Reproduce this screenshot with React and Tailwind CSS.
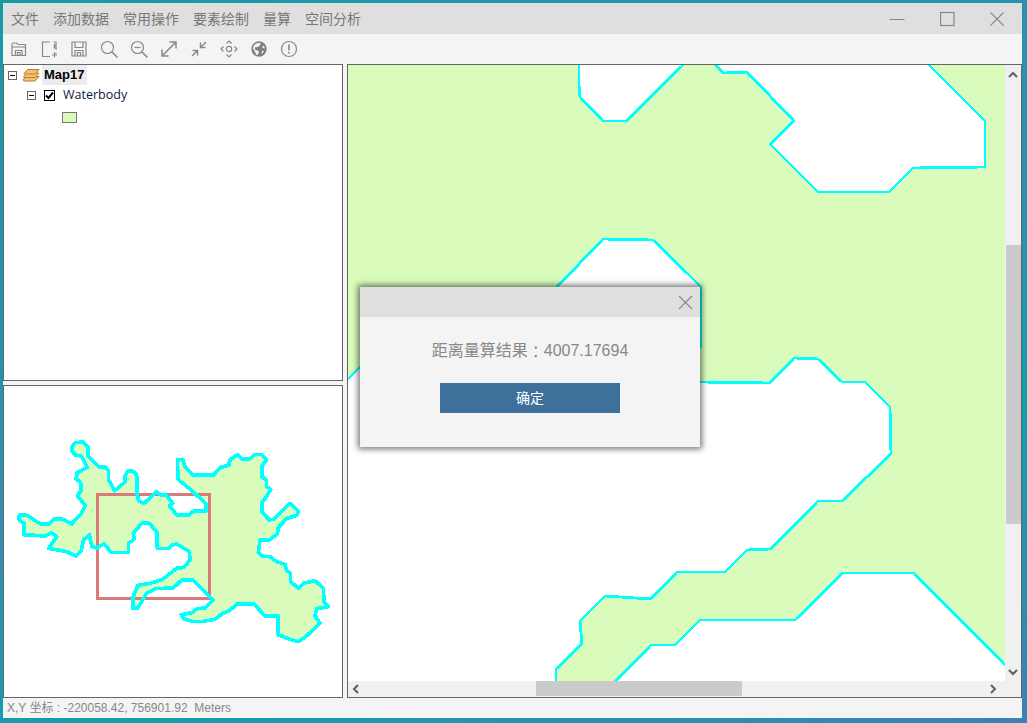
import React from "react";

const I = ({ children }) => (
  <div className="w-[30px] h-[30px] flex items-center justify-center">
    <svg width="20" height="20" viewBox="0 0 20 20" fill="none" stroke="#888888" strokeWidth="1.2">{children}</svg>
  </div>
);

const mapGreen = "340,60 579,60 579,85 580,97 603,121 627,121 688,60 710,60 724,73 747,72 794,121 770,144 818,192 889,192 913,168 985,167 985,121 924,60 1015,60 1015,675 1005,665 914,573 843,573 795,620 700,620 675,645 651,645 607,690 556,690 556,669 582,644 580,621 605,596 651,599 677,572 725,572 747,550 771,549 818,501 842,501 891,454 890,407 865,382 842,382 818,359 794,358 770,383 700,382 500,382 371,356 340,387";
const mapHole = "557,287 603,239 653,240 687,273 701,287 701,347 600,350";

const over = "218,195 225,188 250,186 264,200 264,228 298,262 318,262 326,272 326,300 344,332 375,306 374,290 382,274 400,274 410,286 412,345 416,362 432,370 470,335 484,346 500,346 518,370 508,378 532,406 566,406 580,394 618,394 618,372 578,334 534,298 532,240 548,238 556,262 580,286 640,286 662,262 686,256 690,240 712,224 728,238 750,236 764,224 786,224 800,240 786,258 786,290 800,302 800,320 812,328 800,350 786,366 786,396 808,420 820,418 870,370 896,396 890,406 860,416 835,442 832,462 808,480 780,480 775,518 790,530 810,530 830,545 855,553 860,572 872,580 872,605 895,625 910,610 945,602 970,625 972,665 985,680 950,686 945,708 960,730 915,772 895,785 870,778 850,770 835,765 835,708 795,708 762,672 712,672 688,692 668,700 645,718 610,724 580,725 550,716 544,704 575,698 592,686 615,684 640,660 578,600 545,600 520,624 466,626 440,640 425,665 412,685 398,685 400,648 414,616 450,610 488,598 530,565 552,562 570,540 568,515 530,492 514,496 505,506 472,505 472,458 448,430 425,430 400,460 402,478 386,490 386,518 335,518 312,492 290,504 276,500 268,465 250,480 244,512 228,528 200,515 146,505 170,470 155,458 135,468 72,464 72,430 58,420 58,406 82,406 102,420 122,432 146,432 160,418 190,418 215,432 244,400 256,376 232,348 244,330 242,308 228,296 232,278 262,262 244,228 225,225 215,210";

const Minus = () => (
  <div className="w-[9px] h-[9px] border border-[#666666] flex items-center justify-center bg-white">
    <div className="w-[5px] h-px bg-black" />
  </div>
);

const Chev = ({ d }) => (
  <svg width="10" height="8" viewBox="0 0 10 8" fill="none" stroke="#606060" strokeWidth="2"><path d={d} /></svg>
);

export default function App() {
  return (
    <div className="w-[1027px] h-[723px] overflow-hidden pt-[3px] pl-[3px] pr-[5px] pb-[5px] bg-[linear-gradient(160deg,#169aa6,#2f8fb2_50%,#12a0a8_70%,#3b82b4)]">
      <div className="w-full h-full flex flex-col bg-[#f4f4f4] relative font-['Liberation_Sans','Noto_Sans_CJK_SC',sans-serif]">
        <div className="h-[31px] bg-[#dfdfdf] flex items-center justify-between shrink-0">
          <div className="flex gap-[14px] pl-[8px] text-[14px] text-[#777777] font-['Noto_Sans_CJK_SC',sans-serif]">
            <span>文件</span><span>添加数据</span><span>常用操作</span><span>要素绘制</span><span>量算</span><span>空间分析</span>
          </div>
          <div className="flex items-center pr-[17px]">
            <svg width="16" height="16" viewBox="0 0 16 16" stroke="#888888" strokeWidth="1" fill="none"><path d="M0.5 8.5H15.5" /></svg>
            <svg className="ml-[35px]" width="16" height="16" viewBox="0 0 16 16" stroke="#888888" strokeWidth="1.2" fill="none"><rect x="0.6" y="1.5" width="13.4" height="13" /></svg>
            <svg className="ml-[33px]" width="16" height="16" viewBox="0 0 16 16" stroke="#888888" strokeWidth="1.1" fill="none"><path d="M1.5 1.5L14.5 14.5M14.5 1.5L1.5 14.5" /></svg>
          </div>
        </div>

        <div className="h-[30px] flex items-center pl-[1px] shrink-0">
          <I><path d="M3 16.5V5.5L4 4H8L9 5.5H16.5V16.5ZM3 8H16.5M6.5 16.5V11.5H13V16.5M8.5 16.5V13.5H11V16.5" /></I>
          <I><path d="M11 3H3.5V17.5H11M14.5 3H17V11M17 14V15" /><path d="M15.5 13V18.5M13 16H18" /><path d="M15.5 5V9.5" strokeWidth="1.6" /></I>
          <I><path d="M3 3H17V17H3ZM6 3V8.5H14V3M6 17V11.5H14V17M8.5 17V13.5H11.5V17" /></I>
          <I><circle cx="8.5" cy="8.5" r="6" /><path d="M13 13L18.5 18.5" strokeWidth="1.6" /></I>
          <I><circle cx="8.5" cy="8.5" r="6" /><path d="M13 13L18.5 18.5" strokeWidth="1.6" /><path d="M5.5 8.5H11.5" /></I>
          <I><path d="M3 17L17 3M10.5 3H17V9.5M3 10.5V17H9.5" strokeWidth="1.5" /></I>
          <I><path d="M3 17L8.5 11.5M3.5 11.5H8.5V16.5M17 3L11.5 8.5M11.5 3.5V8.5H16.5" strokeWidth="1.5" /></I>
          <I><circle cx="10" cy="10" r="2.7" /><path d="M7.5 4.5L10 2L12.5 4.5M7.5 15.5L10 18L12.5 15.5M4.5 7.5L2 10L4.5 12.5M15.5 7.5L18 10L15.5 12.5" /></I>
          <I><circle cx="10" cy="10" r="7.7" fill="#808080" stroke="none" /><path d="M7.5 4.2L11.5 3.8L11 6.5L8.5 8L5.5 8.5L6.5 11L9 11.5L10 13.5L8.5 16L7 15.5L6 12.5L3.8 9.5L5 6Z" fill="#f4f4f4" stroke="none" /><path d="M13.5 6.5L15.5 8L15.8 9.5L13.5 9ZM13 12L15 12L13.5 14.5L12.5 14Z" fill="#f4f4f4" stroke="none" /></I>
          <I><circle cx="10" cy="10" r="7.5" /><path d="M10 5.5V11.5" strokeWidth="1.6" /><path d="M10 13V14.6" strokeWidth="1.6" /></I>
        </div>

        <div className="flex-1 flex gap-[4px] min-h-0">
          <div className="w-[340px] flex flex-col gap-[4px]">
            <div className="h-[317px] bg-white border border-[#666666] shrink-0 text-[13px]">
              <div className="h-[20px] flex items-center pl-[4px]">
                <Minus />
                <svg className="ml-[5px]" width="18" height="14" viewBox="0 0 18 14" stroke="#b5802f" strokeWidth="1" fill="#f4c16d">
                  <path d="M1 11.5L5 8.5H17L13 13H2Z" />
                  <path d="M1.5 8.5L5 5H17L13.5 9.5H2Z" />
                  <path d="M2 5.5L5.5 1.5H17L13.5 6H2.5Z" />
                </svg>
                <span className="ml-[2px] pl-[2px] w-[45px] h-[20px] flex items-center bg-[#ececec] font-bold text-black text-[13px]">Map17</span>
              </div>
              <div className="h-[20px] flex items-center pl-[23px]">
                <Minus />
                <div className="ml-[8px] w-[11px] h-[11px] border border-black flex items-center justify-center">
                  <svg width="9" height="9" viewBox="0 0 9 9" fill="none" stroke="#000" strokeWidth="2"><path d="M1 4.5L3.5 7L8 1.5" /></svg>
                </div>
                <span className="ml-[8px] text-[#10203a] font-['Open_Sans',sans-serif] text-[12.5px]">Waterbody</span>
              </div>
              <div className="pl-[58px] pt-[7px]">
                <div className="w-[15px] h-[11px] border border-[#777777] bg-[#d9fcbc]" />
              </div>
            </div>
            <div className="flex-1 bg-white border border-[#666666] min-h-0">
              <svg width="338" height="311" viewBox="4 386 338 311" className="block">
                <g transform="translate(0 380) scale(0.33333)">
                  <polygon points={over} fill="#d9fcbc" />
                  <rect x="292" y="343" width="336" height="313" fill="none" stroke="#d97b7b" strokeWidth="10" shapeRendering="crispEdges" />
                  <polygon points={over} fill="none" stroke="#00ffff" strokeWidth="11" strokeLinejoin="round" shapeRendering="crispEdges" />
                </g>
              </svg>
            </div>
          </div>

          <div className="flex-1 border border-[#666666] flex flex-col min-w-0 bg-white">
            <div className="flex-1 flex min-h-0">
              <svg width="657" height="616" viewBox="348 65 657 616" className="block shrink-0">
                <polygon points={mapGreen} fill="#d9fcbc" stroke="#00ffff" strokeWidth="2.8" strokeLinejoin="round" shapeRendering="crispEdges" />
                <polygon points={mapHole} fill="#ffffff" stroke="#00ffff" strokeWidth="2.8" strokeLinejoin="round" shapeRendering="crispEdges" />
              </svg>
              <div className="w-[16px] bg-[#f0f0f0] flex flex-col items-center">
                <div className="h-[18px] flex items-center justify-center pt-[2px]"><Chev d="M1 6L5 2L9 6" /></div>
                <div className="mt-[162px] w-[15px] h-[279px] bg-[#cbcbcb]" />
                <div className="mt-auto h-[18px] flex items-center justify-center"><Chev d="M1 2L5 6L9 2" /></div>
              </div>
            </div>
            <div className="h-[16px] bg-[#f0f0f0] flex items-center shrink-0">
              <div className="w-[16px] flex justify-center"><svg width="8" height="10" viewBox="0 0 8 10" fill="none" stroke="#606060" strokeWidth="2"><path d="M6 1L2 5L6 9" /></svg></div>
              <div className="ml-[172px] w-[206px] h-[15px] self-start bg-[#cbcbcb]" />
              <div className="ml-auto mr-[20px] w-[16px] flex justify-center"><svg width="8" height="10" viewBox="0 0 8 10" fill="none" stroke="#606060" strokeWidth="2"><path d="M2 1L6 5L2 9" /></svg></div>
            </div>
          </div>
        </div>

        <div className="h-[20px] shrink-0 flex items-center pl-[4px] text-[12px] text-[#888888] whitespace-pre">
          X,Y 坐标 : -220058.42, 756901.92  Meters
        </div>

        <div className="absolute left-[357px] top-[284px] w-[340px] h-[160px] bg-[#f4f4f4] shadow-[0_0_6px_2px_rgba(0,0,0,0.55)] flex flex-col">
          <div className="h-[30px] bg-[#dfdfdf] flex items-center justify-end pr-[7px]">
            <svg width="15" height="15" viewBox="0 0 15 15" stroke="#888888" strokeWidth="1.1" fill="none"><path d="M1 1L14 14M14 1L1 14" /></svg>
          </div>
          <div className="flex-1 flex flex-col items-center pt-[22px]">
            <div className="h-[24px] flex items-center text-[16px] text-[#888888]">距离量算结果<span className="font-['Noto_Sans_CJK_TC',sans-serif]">：</span>4007.17694</div>
            <div className="mt-[20px] w-[180px] h-[30px] pb-[2px] bg-[#3e709c] flex items-center justify-center text-white text-[14px] font-['Noto_Sans_CJK_SC',sans-serif]">确定</div>
          </div>
        </div>
      </div>
    </div>
  );
}
